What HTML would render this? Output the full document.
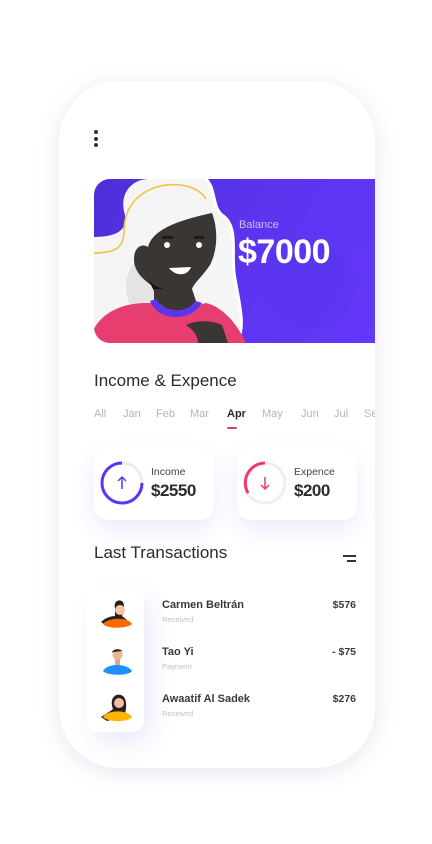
<!DOCTYPE html>
<html><head><meta charset="utf-8"><style>
*{margin:0;padding:0;box-sizing:border-box}
body{width:432px;height:844px;background:#fff;font-family:"Liberation Sans",sans-serif;position:relative;overflow:hidden;color:#2b2b2b}
.phone{position:absolute;left:59px;top:81px;width:316px;height:687px;background:#fff;border-radius:60px;box-shadow:0 4px 22px rgba(120,120,170,.18);overflow:hidden}
.dots{position:absolute;left:35px;top:49px}
.dots i{display:block;width:4px;height:4px;border-radius:50%;background:#333;margin-bottom:2.5px}
.banner{position:absolute;left:35px;top:98px;width:290px;height:164px;border-radius:16px 0 0 16px;background:linear-gradient(120deg,#4d2fd9 0%,#5a33ea 40%,#6438fc 100%);overflow:hidden}
.abs{position:absolute}
.t{position:absolute;white-space:nowrap}
</style></head><body>
<div class="phone">
 <div class="dots"><i></i><i></i><i></i></div>
 <div class="banner">
  <svg class="abs" style="left:0;top:0" width="290" height="164" viewBox="0 0 290 164">
   <circle cx="215" cy="105" r="45" fill="#5a35ee" opacity=".6"/>
   <path d="M0 58 C25 58 35 50 30 32 C26 14 38 0 55 0 L112 0 C122 10 118 28 128 36 C146 48 136 76 141 100 C146 128 152 150 142 164 L0 164 Z" fill="#f5f5f5"/>
   <path d="M112 0 C122 10 118 28 128 36 C146 48 136 76 141 100 C146 128 152 150 142 164" stroke="#fff" stroke-width="3" fill="none"/>
   <path d="M0 74 C22 74 30 68 30 52 C30 28 45 10 72 6 C92 4 106 10 112 20" stroke="#f3c23a" stroke-width="1.5" fill="none"/>
   <ellipse cx="50" cy="108" rx="18" ry="28" fill="#e4e4e4"/>
   <path d="M60 125 L60 108 C48 100 40 92 40 80 C40 68 48 64 54 68 C58 52 80 42 118 34 C124 50 124 70 116 86 C108 98 100 104 98 110 L98 125 Z" fill="#3a3634"/>
   <path d="M54 100 C60 110 80 115 98 110 L98 120 C80 122 66 118 60 112Z" fill="#111"/>
   <circle cx="73" cy="66" r="3" fill="#fff"/><circle cx="105" cy="66" r="3" fill="#fff"/>
   <rect x="68" y="57" width="11" height="3" fill="#1e1a18"/><rect x="100" y="57" width="10" height="3" fill="#1e1a18"/>
   <path d="M75 89 C82 98 94 97 97 88 Z" fill="#fff"/>
   <path d="M0 150 C8 134 28 124 52 124 L60 124 C68 140 92 142 104 126 L112 124 C130 128 145 148 152 164 L0 164 Z" fill="#e63f6f"/>
   <path d="M56 122 C64 142 96 144 108 124 L102 122 C92 136 70 134 62 120 Z" fill="#5b36f2"/>
   <path d="M62 120 C70 134 92 136 102 122 L98 110 L60 110 Z" fill="#3a3634"/>
   <path d="M92 146 C104 140 120 142 128 146 L134 164 L104 164 C104 156 98 150 92 146 Z" fill="#3a3634"/>
  </svg>
  <div class="t" style="left:145px;top:40px;font-size:11px;color:#c9bcff">Balance</div>
  <div class="t" style="left:144px;top:54px;font-size:34px;font-weight:bold;color:#fff;letter-spacing:-.5px">$7000</div>
 </div>
 <div class="t" style="left:35px;top:290px;font-size:17px;color:#2b2b2b">Income &amp; Expence</div>
 <div class="t" style="left:35px;top:327px;font-size:11px;color:#b5b5b5;word-spacing:0">
  <span style="position:absolute;left:0">All</span><span style="position:absolute;left:29px">Jan</span><span style="position:absolute;left:62px">Feb</span><span style="position:absolute;left:96px">Mar</span><span style="position:absolute;left:133px;color:#2b2b2b;font-weight:bold">Apr</span><span style="position:absolute;left:168px">May</span><span style="position:absolute;left:207px">Jun</span><span style="position:absolute;left:240px">Jul</span><span style="position:absolute;left:270px">Se</span>
 </div>
 <div class="abs" style="left:168px;top:346px;width:10px;height:2px;background:#f0386b;border-radius:1px"></div>
 <div class="abs" style="left:35px;top:367px;width:120px;height:72px;background:#fff;border-radius:14px;box-shadow:0 10px 22px rgba(110,120,230,.14)"></div>
 <div class="abs" style="left:178px;top:367px;width:120px;height:72px;background:#fff;border-radius:14px;box-shadow:0 10px 22px rgba(110,120,230,.14)"></div>
 <svg class="abs" style="left:41px;top:380px" width="44" height="44" viewBox="0 0 44 44">
  <circle cx="22" cy="22" r="20" stroke="#eceaf2" stroke-width="3" fill="none"/>
  <path d="M22 2 A20 20 0 1 0 42 22" stroke="#5b36f2" stroke-width="3" fill="none"/>
  <path d="M22 28 V16 M18 20 L22 16 L26 20" stroke="#5b36f2" stroke-width="1.5" fill="none"/>
 </svg>
 <div class="t" style="left:92px;top:385px;font-size:10.5px;color:#444">Income</div>
 <div class="t" style="left:92px;top:400px;font-size:17px;font-weight:bold;color:#2b2b2b;letter-spacing:-.5px">$2550</div>
 <svg class="abs" style="left:184px;top:380px" width="44" height="44" viewBox="0 0 44 44">
  <circle cx="22" cy="22" r="20" stroke="#f2ecee" stroke-width="3" fill="none"/>
  <path d="M22 2 A20 20 0 0 0 5 32" stroke="#f0386b" stroke-width="3" fill="none"/>
  <path d="M22 16 V28 M18 24 L22 28 L26 24" stroke="#f0386b" stroke-width="1.5" fill="none"/>
 </svg>
 <div class="t" style="left:235px;top:385px;font-size:10.5px;color:#444">Expence</div>
 <div class="t" style="left:235px;top:400px;font-size:17px;font-weight:bold;color:#2b2b2b;letter-spacing:-.5px">$200</div>
 <div class="t" style="left:35px;top:462px;font-size:17px;color:#2b2b2b">Last Transactions</div>
 <div class="abs" style="left:284px;top:474px;width:13px;height:2px;background:#333"></div>
 <div class="abs" style="left:288px;top:479px;width:9px;height:2px;background:#333"></div>
 <div class="abs" style="left:27px;top:505px;width:58px;height:146px;background:#fff;border-radius:12px;box-shadow:8px 12px 22px rgba(110,120,230,.14)"></div>
 <svg class="abs" style="left:40px;top:513px" width="36" height="36" viewBox="0 0 36 36"><path d="M2 28 C6 24 12 22 16 22 L16 14 C14 8 20 4 24 8 C26 12 25 18 23 22 L28 26 L8 32 Z" fill="#2a1f1c"/><circle cx="21" cy="16" r="5" fill="#f3c6a8"/><path d="M4 30 C8 24 28 22 33 30 C30 34 10 36 4 30Z" fill="#ff6a00"/></svg>
 <svg class="abs" style="left:40px;top:560px" width="36" height="36" viewBox="0 0 36 36"><rect x="16" y="18" width="5" height="6" fill="#e0a886"/><circle cx="18.5" cy="14" r="5" fill="#eab394"/><path d="M13 12 C13 7 24 7 24 12 L23 10 L14 11Z" fill="#2a1f1c"/><path d="M4 30 C8 22 28 22 33 30 C30 35 8 35 4 30Z" fill="#1e8fff"/></svg>
 <svg class="abs" style="left:40px;top:606px" width="36" height="36" viewBox="0 0 36 36"><path d="M2 30 C8 26 12 24 14 22 C10 12 16 6 22 8 C28 10 28 20 26 26 L30 28 L8 34 Z" fill="#2a1f1c"/><circle cx="20" cy="16" r="5" fill="#f0bea0"/><path d="M4 30 C8 23 28 22 33 30 C30 35 10 36 4 30Z" fill="#ffb400"/></svg>
 <div class="t" style="left:103px;top:518px;font-size:11px;font-weight:bold;color:#3a3a3a">Carmen Beltrán</div>
 <div class="t" style="left:103px;top:534px;font-size:7.5px;color:#c2c2c2">Received</div>
 <div class="t" style="right:19px;top:518px;font-size:10.5px;font-weight:bold;color:#3a3a3a">$576</div>
 <div class="t" style="left:103px;top:565px;font-size:11px;font-weight:bold;color:#3a3a3a">Tao Yi</div>
 <div class="t" style="left:103px;top:581px;font-size:7.5px;color:#c2c2c2">Payment</div>
 <div class="t" style="right:19px;top:565px;font-size:10.5px;font-weight:bold;color:#3a3a3a">- $75</div>
 <div class="t" style="left:103px;top:612px;font-size:11px;font-weight:bold;color:#3a3a3a">Awaatif Al Sadek</div>
 <div class="t" style="left:103px;top:628px;font-size:7.5px;color:#c2c2c2">Received</div>
 <div class="t" style="right:19px;top:612px;font-size:10.5px;font-weight:bold;color:#3a3a3a">$276</div>
</div>
</body></html>
